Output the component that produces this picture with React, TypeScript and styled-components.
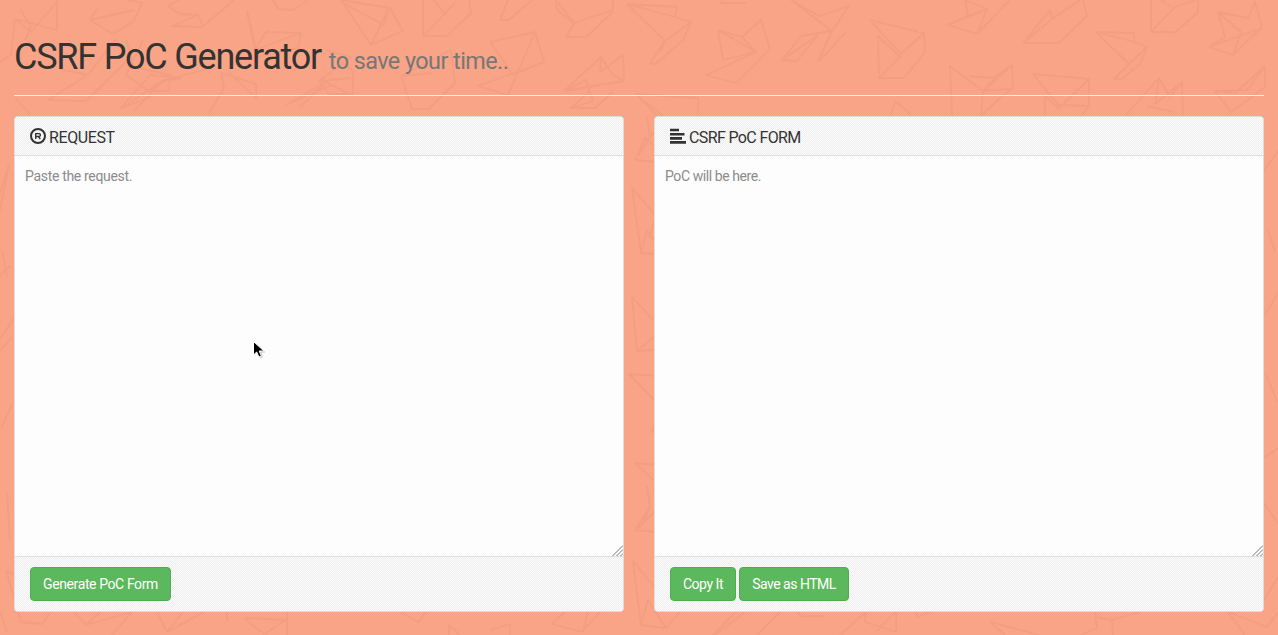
import React from 'react';
import styled, { createGlobalStyle } from 'styled-components';

const GlobalStyle = createGlobalStyle`
  * { box-sizing: border-box; }
  html, body { margin: 0; height: 100%; overflow: hidden; }
  body { background: #f9a486; color: #333; font: 14px/20px Roboto, "Liberation Sans", sans-serif; }
`;

const Page = styled.main`
  position: relative;
  height: 635px;
  padding: 37px 14px 0;
  overflow: hidden;
`;

const Wallpaper = styled.svg`
  position: absolute;
  inset: 0;
  width: 1278px;
  height: 635px;
  fill: none;
  stroke: #f39e81;
  stroke-width: 1.8;
  stroke-linejoin: round;
  z-index: 0;
`;

const Header = styled.header`
  position: relative;
  height: 59px;
  margin-bottom: 20px;
  border-bottom: 1px solid #fff0ea;
`;

const Title = styled.h1`
  margin: 0;
  font-size: 36px;
  line-height: 40px;
  font-weight: 400;
  letter-spacing: -1.22px;
  white-space: nowrap;
`;

const Subtitle = styled.small`
  font-size: 23.4px;
  letter-spacing: -0.55px;
  color: #777;
`;

const Columns = styled.div`
  position: relative;
  display: grid;
  grid-template-columns: 610px 610px;
  gap: 30px;
`;

const Panel = styled.section`
  display: flex;
  flex-direction: column;
  height: 496px;
  border: 1px solid #ddd;
  border-radius: 4px;
  background: #fdfdfd;
  overflow: hidden;
`;

const weave = 'repeating-conic-gradient(#ededed 0 25%, #fdfdfd 0 50%) 0 0 / 2px 2px';

const PanelHeading = styled.div`
  display: flex;
  align-items: center;
  gap: 3px;
  height: 39px;
  padding: 4px 15px 0;
  border-bottom: 1px solid #ddd;
  background: ${weave};
  svg { margin-top: -4px; }
`;

const PanelTitle = styled.h3<{ $spacing: number }>`
  margin: 0;
  font-size: 16px;
  line-height: 18px;
  font-weight: 400;
  letter-spacing: ${p => p.$spacing}px;
`;

const EditorFrame = styled.div`
  position: relative;
  height: 400px;
`;

const Editor = styled.textarea<{ $spacing: number }>`
  display: block;
  width: 100%;
  height: 100%;
  padding: 10px;
  border: 0;
  outline: 0;
  background: #fdfdfd;
  font: inherit;
  letter-spacing: ${p => p.$spacing}px;
  resize: none;
  &::placeholder { color: #8b8b8b; opacity: 1; }
`;

const Grip = styled.svg`
  position: absolute;
  right: 0;
  bottom: 0;
  fill: none;
  stroke: #777;
`;

const PanelFooter = styled.div`
  display: flex;
  align-items: flex-start;
  gap: 3px;
  flex: 1;
  padding: 10px 15px;
  border-top: 1px solid #ddd;
  background: ${weave};
`;

const Button = styled.button<{ $width: number; $spacing: number }>`
  width: ${p => p.$width}px;
  height: 34px;
  padding: 0;
  border: 1px solid #4cae4c;
  border-radius: 4px;
  background: #5cb85c;
  color: #fff;
  font: inherit;
  letter-spacing: ${p => p.$spacing}px;
  white-space: nowrap;
`;

const Pointer = styled.svg`
  position: absolute;
  left: 252px;
  top: 340px;
`;

const birds = [
  // top edge
  'M15 19L57 30L57 1M15 19L11 55L0 62M15 19L31 32L57 2M20 9L31 27M31 27L25 40',
  'M97 9L90 20L113 34L134 21L142 3L128 0M90 20L134 10',
  'M179 0L168 6L180 14L198 15L172 26L202 27L234 0M198 15L203 26',
  'M273 0L278 9L293 10L308 0',
  'M341 0L371 45L403 31L390 8L341 0M371 45L388 10L384 25L341 2',
  'M423 0V36H447L471 13L469 0M423 36L455 3M434 0L446 15',
  'M508 0L500 20H509L532 0M556 0L574 23L613 10V0M574 23L566 37H586L613 12M555 2L558 11L574 23',
  'M627 4L675 17L677 7L627 4L665 41L691 22L683 40L656 64L650 63L665 41M665 41L660 52M675 17L691 22',
  'M720 1L722 3L746 3M791 0L832 31L849 6L819 16L791 0M832 31L818 61L825 55L846 32M832 31L801 36L782 60L797 61L818 35L782 60',
  'M718 30L756 52L706 75L736 83L770 49L761 20L742 37L718 30L723 60L756 52M742 37L756 52',
  'M490 42L535 32L544 62L478 86L508 95L535 32M490 42L513 75L544 62',
  // second row
  'M247 11L255 50L301 33L298 48L258 57L247 11M255 50L266 32L301 33',
  'M126 40L134 67L170 75L169 91L149 91L126 75L143 40M149 91L168 79',
  'M48 100L86 101L128 60M48 100L88 75L116 39M88 75L60 69',
  'M221 73L256 84V98L238 81L229 73M221 73L224 88L209 113',
  'M120 109L150 75L181 78L162 81L120 109M135 110L162 81L208 69M119 109L155 95',
  'M327 50L351 57L319 81L329 94H353V71L327 50M319 81L351 78',
  'M286 105L326 82L331 85L286 105M300 107L326 82L351 95',
  'M401 76L451 50L455 83L429 109H412L401 76M401 76L432 73',
  'M564 91L601 57L600 72L623 55L624 81L564 91M601 57L613 75L624 81M564 91L586 80L593 101L571 108H595L613 92M571 108L590 91',
  'M635 94L698 98V113M635 94L666 118',
  'M870 20L924 33L925 52L904 78H879L878 36M870 20L901 54L924 33M878 36L901 58M879 78L901 56',
  'M965 0L968 16L948 25L977 34L1010 0M968 16L987 9L977 34M948 25L987 9L965 0',
  'M1023 43L1050 10L1052 19L1080 0M1023 43H1059L1087 16L1083 0M1023 43L1051 20',
  'M1151 0V32H1176L1198 12V0M1151 32L1175 7L1195 0M1161 0L1172 7',
  'M1218 12L1248 18L1255 2L1262 27L1233 55L1209 47L1225 37L1218 12M1209 47L1262 28M1218 12L1241 32L1233 55',
  'M1096 32L1134 33V42L1147 47L1140 64L1122 79H1114L1129 64L1096 32M1129 64L1147 47M1134 42L1120 38L1096 32',
  'M952 115L950 66L983 91L1012 65L1013 88L1000 98L982 115M969 76L994 78L1012 65M1013 89L983 91L981 115M983 91L996 78',
  'M1033 74L1089 79V106L1082 115M1033 74L1060 107L1089 79M1045 96V115M1060 105L1089 106M1045 96L1060 110',
  'M1126 115L1159 78L1170 97L1182 82L1183 115M1159 78L1155 104L1182 82M1147 106L1173 112',
  'M1265 66L1247 90L1215 91L1231 112L1265 87V66M1215 91L1235 93L1265 66',
  'M890 115L896 101L911 115M896 101L901 106',
  // centre gutter
  'M636 94L657 116M647 116L650 137L635 160L657 162M650 137L657 130M636 160L645 137L653 145',
  'M632 188L641 253L657 254M632 188L656 216M641 253L647 230L656 244M657 214L649 238',
  'M632 297L656 323M632 297L637 351L657 334M637 351L656 350',
  'M629 374L660 376M629 374L657 403M651 433L657 420',
  'M635 463L657 483M635 463L656 465M647 486L650 507L635 530L657 532M636 530L656 510M650 507L644 520',
  // left margin
  'M15 98L31 115M0 193L9 164M0 210L9 164M2 250L7 277M0 276L10 266M0 339L14 318M0 351L12 337M1 428L12 405M7 492L10 540M6 570L21 622L42 624L51 612M6 570L14 575M0 611L7 632',
  // right margin
  'M1264 171L1278 151M1268 230L1275 251M1278 293L1265 315M1266 374L1277 402M1278 448L1264 458M1264 503L1278 523M1278 577L1264 600',
  // bottom edge
  'M74 612L86 625L132 612M86 625L100 612M112 635L132 612M157 612L167 632L204 612M183 612L167 632M226 611L228 622M244 618L286 620L263 635M244 618L264 634M287 611V635',
  'M399 611L418 622L426 612M449 635V625L460 635M490 630L510 624V635',
  'M552 624L565 612M552 624L582 632L600 612M583 632L588 612',
  'M633 561L641 625L666 628L680 612M633 561L655 588M641 625L648 600L666 628',
  'M715 635L745 612M713 635L736 612M757 635L780 612M797 612L801 616H824M840 635L866 612L865 622L896 632V612M877 631L895 612',
  'M915 612L918 617L930 612M990 622L1040 635M990 622L1005 635M1081 635L1097 628L1095 612M1097 617L1112 620L1140 612M1112 620L1113 635',
  'M1228 612L1245 635M1228 612L1267 627L1278 612',
];

function Registered() {
  return (
    <svg width="16" height="16" viewBox="0 0 16 16" fill="none" stroke="#333">
      <circle cx="8" cy="8" r="7" strokeWidth="2" />
      <path d="M5.7 11V5.6H9a1.4 1.4 0 0 1 0 2.9H5.7M8.5 8.7l1.8 2.3" strokeWidth="1.4" />
    </svg>
  );
}

function Lines() {
  return (
    <svg width="16" height="16" viewBox="0 0 16 16" fill="#333">
      <path d="M0 .7h9v2.6H0zM0 4.9h14.5v2.6H0zM0 9.1h12v2.6H0zM0 13.1h16v2.6H0z" />
    </svg>
  );
}

function RequestEditor({ placeholder, spacing }: { placeholder: string; spacing: number }) {
  return (
    <EditorFrame>
      <Editor $spacing={spacing} placeholder={placeholder} />
      <Grip width="11" height="11" viewBox="0 0 11 11">
        <path d="M.5 11L11 .5M4.5 11L11 4.5M8.5 11L11 8.5" />
      </Grip>
    </EditorFrame>
  );
}

export default function App() {
  return (
    <>
      <GlobalStyle />
      <Page>
        <Wallpaper viewBox="0 0 1278 635">
          <defs>
            <pattern id="specks" width="36" height="36" patternUnits="userSpaceOnUse">
              <path d="M2 7.5h1M14 3.5h1M25 13.5h1M9 21.5h1M32 28.5h1M19 31.5h1" stroke="#edb184" strokeWidth="1" />
            </pattern>
          </defs>
          {birds.map((d, i) => <path key={i} d={d} />)}
          <rect width="1278" height="635" fill="url(#specks)" stroke="none" />
        </Wallpaper>
        <Header>
          <Title>CSRF PoC Generator <Subtitle>to save your time..</Subtitle></Title>
        </Header>
        <Columns>
          <Panel>
            <PanelHeading><Registered /><PanelTitle $spacing={-0.4}>REQUEST</PanelTitle></PanelHeading>
            <RequestEditor spacing={-0.32} placeholder="Paste the request." />
            <PanelFooter><Button $width={141} $spacing={-0.4}>Generate PoC Form</Button></PanelFooter>
          </Panel>
          <Panel>
            <PanelHeading><Lines /><PanelTitle $spacing={-0.62}>CSRF PoC FORM</PanelTitle></PanelHeading>
            <RequestEditor spacing={-0.42} placeholder="PoC will be here." />
            <PanelFooter>
              <Button $width={66} $spacing={-0.45}>Copy It</Button>
              <Button $width={110} $spacing={-0.5}>Save as HTML</Button>
            </PanelFooter>
          </Panel>
        </Columns>
        <Pointer width="14" height="20" viewBox="0 0 14 20">
          <path d="M1.5 1.5V15l3.2-3 2.2 5 2.5-1-2.2-5H12z" fill="#000" stroke="#fff" strokeWidth="1" />
          <path d="M8 18l2.5-1-1.8-5H13" fill="none" stroke="#aaa" strokeWidth=".7" />
        </Pointer>
      </Page>
    </>
  );
}
